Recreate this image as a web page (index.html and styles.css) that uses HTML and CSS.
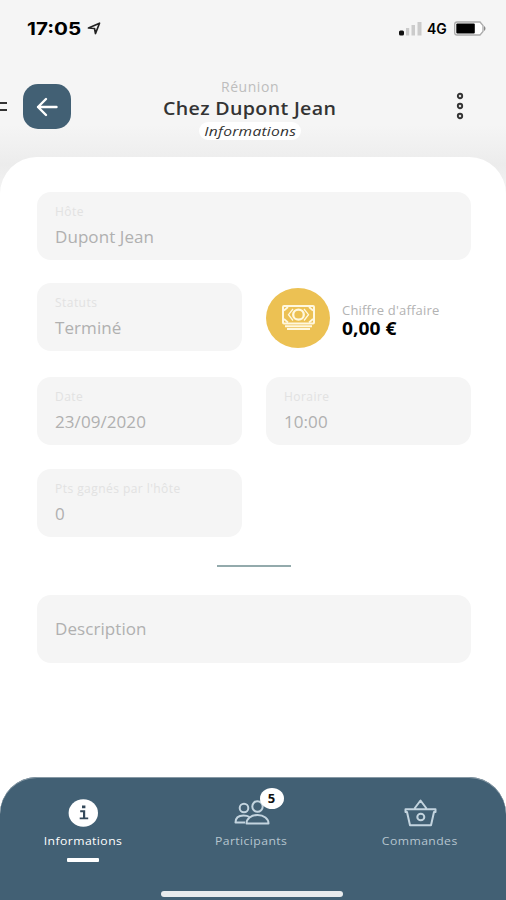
FILE: index.html
```html
<!DOCTYPE html>
<html lang="fr">
<head>
<meta charset="utf-8">
<title>Réunion</title>
<link rel="stylesheet" href="styles.css">
</head>
<body>
<div class="app">
  <div class="status">
    <span class="time">17:05</span>
    <svg class="location" width="14" height="13" viewBox="0 0 14 13"><path d="M1.500 6 12.500 1.200 8.500 11.500 7.500 6.500Z" fill="none" stroke="#222" stroke-width="1.700" stroke-linejoin="round"/></svg>
    <svg class="signal" width="24" height="14" viewBox="0 0 24 14"><rect x="1" y="8.500" width="5" height="5" rx="1.500" fill="#111"/><path d="M8 6h3.200v7.500H8zM13.500 3h3.500v10.500h-3.500zM19.500 0h4v13.500h-4z" fill="#cbcbcb"/></svg>
    <span class="network">4G</span>
    <svg class="battery" width="32" height="15" viewBox="0 0 32 15"><path d="M3 1h23l3 3.500v6L26 14H3q-2.300 0-2.300-2.300V3.300Q.7 1 3 1Z" fill="#fff" stroke="#aaa" stroke-width="1.300"/><rect x="2.300" y="2.500" width="18.500" height="10" rx="1" fill="#000"/><path d="M30 5c2 1 2 4 0 5z" fill="#888"/></svg>
  </div>
  <header class="header">
    <span class="edge"></span>
    <div class="back"><svg width="22" height="20" viewBox="0 0 22 20"><path d="M10 2 2 10l8 8M2 10h18.500" fill="none" stroke="#fff" stroke-width="2.400" stroke-linecap="round" stroke-linejoin="round"/></svg></div>
    <div class="heading">
      <div class="kicker">Réunion</div>
      <h1>Chez Dupont Jean</h1>
      <div class="section"><span>Informations</span></div>
    </div>
    <svg class="more" width="8" height="28" viewBox="0 0 8 28"><g fill="#ddd" stroke="#333" stroke-width="1.900"><circle cx="4" cy="4" r="2.200"/><circle cx="4" cy="14" r="2.200"/><circle cx="4" cy="24" r="2.200"/></g></svg>
  </header>
  <main class="sheet">
    <div class="fields">
      <div class="field wide"><label>Hôte</label><span>Dupont Jean</span></div>
      <div class="field"><label>Statuts</label><span>Terminé</span></div>
      <div class="revenue">
        <div class="coin"><svg width="33" height="26" viewBox="0 0 33 26"><g fill="none" stroke="#fff8df" stroke-width="2"><rect x="1" y="1" width="31" height="17.500" rx="1"/><ellipse cx="16.500" cy="9.700" rx="5.300" ry="5" stroke-width="2.300"/><path d="M2 5.500 6 2M27 2l4 3.500M2 14l4 3.500M27 17.500l4-3.500" stroke-width="1.700"/><path d="M11 4 6.500 9.700 11 15.500M22 4l4.500 5.700L22 15.500" stroke-width="1.300"/><path d="M3 21.300h27M5 24h23" stroke-width="2"/></g></svg></div>
        <div class="amount"><div class="amount-label">Chiffre d'affaire</div><div class="amount-value">0,00 €</div></div>
      </div>
      <div class="field"><label>Date</label><span>23/09/2020</span></div>
      <div class="field"><label>Horaire</label><span>10:00</span></div>
      <div class="field"><label>Pts gagnés par l'hôte</label><span>0</span></div>
    </div>
    <hr class="divider">
    <div class="field description"><span>Description</span></div>
  </main>
  <nav class="tabs">
    <div class="tab active">
      <svg width="32" height="30" viewBox="0 0 32 30"><ellipse cx="16.300" cy="15" rx="14.700" ry="13.800" fill="#fff"/><path d="M15 7.500h3.400v2.700H15zM13.200 12.300h5v7.100h3v1.900h-8.500v-1.900h3.300v-5.200h-2.800z" fill="#34495a"/></svg>
      <span>Informations</span>
      <i class="marker"></i>
    </div>
    <div class="tab">
      <div class="people">
        <svg width="36" height="30" viewBox="0 0 36 30"><g fill="none" stroke="#c3d4df" stroke-width="2" stroke-linejoin="round"><ellipse cx="10" cy="10" rx="4.300" ry="4.200"/><ellipse cx="23.500" cy="8.500" rx="5.200" ry="5.300"/><path d="M12.500 25.500c0-4.500 4.500-8.500 11-8.500S34.500 21 34.500 25.500Z"/><path d="M11 24.500H1.500c0-4.500 3-7 8-7 2.500 0 4.500.5 6 1.500"/></g></svg>
        <b class="badge">5</b>
      </div>
      <span>Participants</span>
    </div>
    <div class="tab">
      <svg width="34" height="30" viewBox="0 0 34 30"><g fill="none" stroke="#c3d4df" stroke-width="2" stroke-linejoin="round"><path d="M2.500 11.300h30v2.700H31l-3 13.200H7L4 14H2.500zM11.500 10.500l6-8 6 8"/><ellipse cx="17.800" cy="19" rx="3.500" ry="3.300"/></g></svg>
      <span>Commandes</span>
    </div>
    <div class="home"></div>
  </nav>
</div>
</body>
</html>
```

FILE: styles.css
```css
* { box-sizing: border-box; }
body { margin: 0; font-family: "Open Sans", sans-serif; }
.app { width: 506px; height: 900px; overflow: hidden; display: flex; flex-direction: column; background: linear-gradient(#f5f5f5 0, #f5f5f5 125px, #ececec 165px, #f5f5f5 200px); }
.status { height: 57px; flex: none; display: flex; align-items: center; padding: 0 20px 0 27px; color: #000; }
.time { font: 700 17.5px/24px Inter, sans-serif; width: 60px; white-space: nowrap; transform: scaleX(1.18); transform-origin: left; }
.signal { margin-left: auto; }
.network { font: 600 14px/20px Inter, sans-serif; width: 22px; margin: 1px 5px 0 5px; }
.header { height: 100px; flex: none; display: flex; align-items: flex-start; padding-top: 19px; }
.edge { width: 7px; height: 9px; margin: 26px 16px 0 0; border: solid #333; border-width: 2px 0; }
.back { width: 48px; height: 45px; margin-top: 8px; border-radius: 15px; background: #426074; display: flex; align-items: center; justify-content: center; }
.heading { width: 358px; display: flex; flex-direction: column; align-items: center; }
.kicker { font-size: 14px; line-height: 22px; letter-spacing: .55px; color: #bdbdbd; }
h1 { margin: 0; font-size: 18.5px; line-height: 20px; font-weight: 600; letter-spacing: .3px; color: #333; white-space: nowrap; transform: scaleX(1.06); }
.section { margin-top: 4px; width: 102px; height: 18px; border-radius: 9px; background: #fff; font-size: 13px; line-height: 18px; font-style: italic; text-align: center; color: #333; }
.section span { display: inline-block; letter-spacing: .2px; transform: scaleX(1.2); }
.more { margin: 16px 0 0 27px; }
.sheet { flex: 1; background: #fff; border-radius: 37px 37px 0 0; padding: 35px 35px 0 37px; margin-bottom: -40px; }
.fields { display: grid; grid-template-columns: 205px 205px; grid-template-rows: 67px 70px 68px 68px; gap: 24px; }
.field { height: 68px; border-radius: 14px; background: #f5f5f5; padding: 11px 18px 0; display: flex; flex-direction: column; white-space: nowrap; color: #b0b0b0; font-size: 17px; line-height: 24px; letter-spacing: .07px; }
.field label { font-size: 12px; line-height: 18px; color: #e2e2e2; letter-spacing: .45px; margin-bottom: 4px; }
.wide { grid-column: span 2; }
.revenue { display: flex; align-items: center; height: 70px; }
.coin { width: 64px; height: 60px; border-radius: 50%; background: #ecc153; display: flex; align-items: center; justify-content: center; }
.amount { margin-left: 12px; padding-top: 3px; white-space: nowrap; }
.amount-label { font-size: 13px; line-height: 18px; letter-spacing: .2px; color: #b3b3b3; }
.amount-value { font-size: 17px; line-height: 20px; font-weight: 700; color: #000; transform: scaleX(1.13); transform-origin: left; }
.divider { width: 74px; height: 2px; margin: 28px 0 28px 180px; border: 0; background: #93aaac; }
.description { padding-top: 22px; }
.tabs { height: 123px; flex: none; display: grid; grid-template-columns: 166px 171px 166px; grid-template-rows: 117px; background: #426074; border-radius: 37px 37px 0 0; position: relative; box-shadow: inset 0 1px #8799a5; }
.tab { display: flex; flex-direction: column; align-items: center; padding-top: 21px; font-size: 11.5px; line-height: 18px; color: #b6c5cf; letter-spacing: .4px; }
.tab svg { display: block; }
.tab > span { margin-top: 4px; transform: scaleX(1.06); }
.active { color: #fff; }
.marker { width: 32px; height: 4px; margin-top: 8px; border-radius: 1px; background: #fff; }
.people { position: relative; }
.badge { position: absolute; left: 26px; top: -10px; width: 24px; height: 21px; border-radius: 50%; background: #fff; color: #111; font-size: 13px; line-height: 21px; text-align: center; letter-spacing: 0; }
.home { position: absolute; left: 161px; bottom: 3px; width: 182px; height: 6px; border-radius: 3px; background: #e8ebed; }
```
